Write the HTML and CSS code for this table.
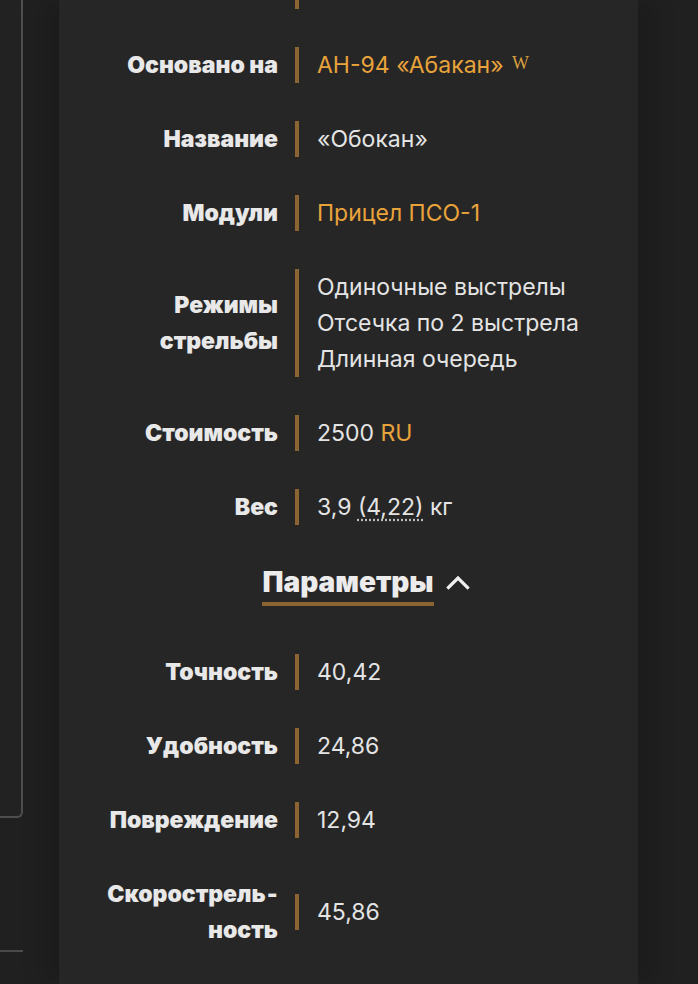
FILE: index.html
```html
<!DOCTYPE html>
<html lang="ru">
	<head>
		<meta charset="utf-8">
		<title>АН-94 «Обокан»</title>
		<link rel="stylesheet" href="styles.css">
	</head>
	<body>
		<div class="page">
			<div class="sidebar">
				<div class="sidebox"></div>
				<div class="sideline"></div>
			</div>

			<div class="infobox">
				<div class="rows">
					<div class="row">
						<div class="label"></div>
						<div class="value stub"></div>
					</div>
					<div class="row">
						<div class="label">Основано на</div>
						<div class="value"><a class="link" href="#">АН-94 «Абакан»</a> <sup class="wiki">W</sup></div>
					</div>
					<div class="row">
						<div class="label">Название</div>
						<div class="value">«Обокан»</div>
					</div>
					<div class="row">
						<div class="label">Модули</div>
						<div class="value"><a class="link" href="#">Прицел ПСО-1</a></div>
					</div>
					<div class="row">
						<div class="label">Режимы стрельбы</div>
						<div class="value">
							Одиночные выстрелы<br>
							Отсечка по 2 выстрела<br>
							Длинная очередь
						</div>
					</div>
					<div class="row">
						<div class="label">Стоимость</div>
						<div class="value">2500 <a class="link" href="#">RU</a></div>
					</div>
					<div class="row">
						<div class="label">Вес</div>
						<div class="value">3,9 <abbr class="hint" title="С модулями">(4,22)</abbr> кг</div>
					</div>
				</div>

				<div class="section-head">
					<span class="section-title">Параметры</span>
					<svg class="chevron" width="24" height="16" viewBox="0 0 24 16">
						<path d="M2.5 13.5 L12 4 L21.5 13.5" fill="none" stroke="#f0f0f0" stroke-width="3.2" stroke-linecap="square" stroke-linejoin="miter"/>
					</svg>
				</div>

				<div class="rows">
					<div class="row">
						<div class="label">Точность</div>
						<div class="value">40,42</div>
					</div>
					<div class="row">
						<div class="label">Удобность</div>
						<div class="value">24,86</div>
					</div>
					<div class="row">
						<div class="label">Повреждение</div>
						<div class="value">12,94</div>
					</div>
					<div class="row">
						<div class="label">Скорострель&shy;ность</div>
						<div class="value">45,86</div>
					</div>
				</div>
			</div>
		</div>
	</body>
</html>
```

FILE: styles.css
```css
body {margin:0; background-color:#202020; color:#e6e6e6; font-family:Inter, "Noto Sans", sans-serif; overflow:hidden;}

.page {display:flex; height:984px; overflow:hidden;}

.sidebar {width:23px; flex:none; display:flex; flex-direction:column;}
.sidebox {height:816px; border-right:2px solid #4e4e4e; border-bottom:2px solid #4e4e4e; border-bottom-right-radius:6px; background-color:#222222;}
.sideline {margin-top:132px; height:2px; background-color:#4a4a4a;}

.infobox {width:579px; flex:none; margin-left:36px; background-color:#262626; box-shadow:-18px 0 20px rgba(0,0,0,0.12), 18px 0 20px rgba(0,0,0,0.12); padding:0 0 40px 0;}

.rows {display:flex; flex-direction:column; gap:38px;}

.row {display:grid; grid-template-columns:236px 1fr; align-items:center;}

.label {padding-left:14px; padding-right:17px; text-align:right; font-weight:900; font-size:23px; line-height:36px; color:#e8e8e8; hyphens:manual;}

.value {border-left:4px solid #8c6431; padding-left:18px; font-size:23px; line-height:36px; color:#e4e4e4;}
.stub {height:9px;}

.link {color:#e9a33b; text-decoration:none;}

.wiki {font-family:"Liberation Serif", serif; font-size:18px; line-height:18px; color:#d9a040; vertical-align:top; position:relative; top:7px; margin-left:2px;}

.hint {text-decoration:underline dotted #bbbbbb; text-underline-offset:4px;}

.section-head {display:flex; justify-content:center; align-items:center; gap:12px; margin:39px 0 48px 0; padding-left:35px;}
.section-title {font-weight:900; font-size:28px; line-height:36px; color:#ececec; border-bottom:4px solid #8c6431; padding-bottom:2px;}
.chevron {display:block; margin-top:-6px;}
```
